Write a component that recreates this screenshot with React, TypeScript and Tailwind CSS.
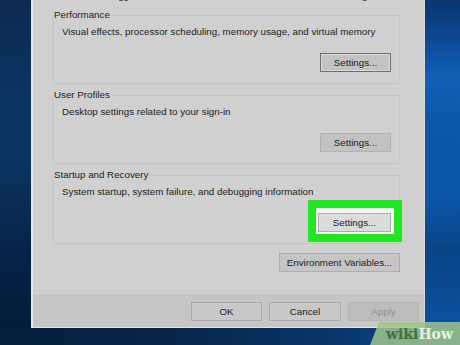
import React from 'react'

type BtnProps = {
  label: string
  className?: string
  disabled?: boolean
}

function DlgButton({ label, className = '', disabled = false }: BtnProps) {
  return (
    <button
      type="button"
      className={`h-[19px] flex items-center justify-center leading-none border ${
        disabled ? 'text-[#8d8d8d]' : 'text-[#1c1c1c]'
      } ${className}`}
    >
      {label}
    </button>
  )
}

type GroupProps = {
  title: string
  description: string
  children: React.ReactNode
  className?: string
}

function Group({ title, description, children, className = '' }: GroupProps) {
  return (
    <fieldset className={`h-[75px] w-[348px] border border-[#c5c5c5] ${className}`}>
      <legend className="ml-[1px] leading-[12px] text-[#1c1c1c]">{title}</legend>
      <p className="mt-[5px] ml-[9px] leading-[12px] text-[#1c1c1c]">{description}</p>
      <div className="mt-[15px] pr-[8px] flex justify-end">{children}</div>
    </fieldset>
  )
}

export default function App() {
  return (
    <div className="relative w-[460px] h-[345px] overflow-hidden bg-[linear-gradient(90deg,#05203f_0%,#072549_35%,#093567_70%,#0b4a90_100%)] font-['Liberation_Sans',Arial,sans-serif] text-[9.75px]">
      <div className="flex h-[328px]">
        {/* desktop, left */}
        <div className="w-[31px] bg-[linear-gradient(180deg,#0c2b53_0%,#0c3462_30%,#0b3360_50%,#062348_78%,#041c3b_100%)]" />

        {/* System Properties dialog */}
        <div className="w-[394px] flex flex-col border-l-2 border-b border-r border-l-[#e4eaf1] border-b-[#dde4ec] border-r-[#d9d9d9]">
          <div className="h-[294px] bg-[#d0d0d0] pl-[19px] flex flex-col">
            <p className="mt-[-10px] ml-[2px] leading-[12px] text-[#1c1c1c]">
              You must be logged on as an Administrator to make most of these changes.
            </p>

            <Group
              className="mt-[7px]"
              title="Performance"
              description="Visual effects, processor scheduling, memory usage, and virtual memory"
            >
              <DlgButton
                label="Settings..."
                className="w-[71px] bg-[#c3c3c3] border-[#6e6e6e] shadow-[inset_0_0_0_1px_#dadada]"
              />
            </Group>

            <Group
              className="mt-[5px]"
              title="User Profiles"
              description="Desktop settings related to your sign-in"
            >
              <DlgButton label="Settings..." className="w-[71px] bg-[#c2c2c2] border-[#b2b2b2]" />
            </Group>

            <Group
              className="mt-[5px]"
              title="Startup and Recovery"
              description="System startup, system failure, and debugging information"
            >
              <div className="relative">
                {/* highlight frame */}
                <div className="absolute -left-[10px] -right-[11px] -top-[13px] -bottom-[10px] border-[8px] border-[#22e622] bg-[#f4f4f4]" />
                <DlgButton
                  label="Settings..."
                  className="relative w-[73px] bg-[#dcdcdc] border-[#adadad]"
                />
              </div>
            </Group>

            <div className="mt-[9px] w-[348px] flex justify-end">
              <DlgButton label="Environment Variables..." className="w-[121px] bg-[#c6c6c6] border-[#adadad]" />
            </div>
          </div>

          <div className="flex-1 bg-[#c6c6c6] pt-[8px] pr-[5px] flex justify-end gap-[7px]">
            <DlgButton label="OK" className="w-[71px] h-[18px] bg-[#c8c8c8] border-[#a9a9a9]" />
            <DlgButton label="Cancel" className="w-[72px] h-[18px] bg-[#c8c8c8] border-[#a9a9a9]" />
            <DlgButton label="Apply" disabled className="w-[71px] h-[18px] bg-[#bdbdbd] border-[#b5b5b5]" />
          </div>
        </div>

        {/* desktop, right */}
        <div className="flex-1 bg-[linear-gradient(180deg,#0a3570_0%,#0d4a94_12%,#1160b6_24%,#0c57aa_36%,#0b56a9_60%,#0a4486_76%,#0b4a92_88%,#0b52a2_100%)]" />
      </div>

      {/* watermark */}
      <div className="absolute right-0 bottom-0 w-[90px] h-[23px] bg-[#9fc48c]/85 [clip-path:polygon(9px_0,100%_0,100%_100%,0_100%)] flex items-center pl-[16px] pt-[1px] font-['DejaVu_Serif',serif] font-bold text-[14px] leading-none">
        <span className="text-[#3f6f3b]">wiki</span>
        <span className="text-[#e9f1e2]">How</span>
      </div>
    </div>
  )
}
